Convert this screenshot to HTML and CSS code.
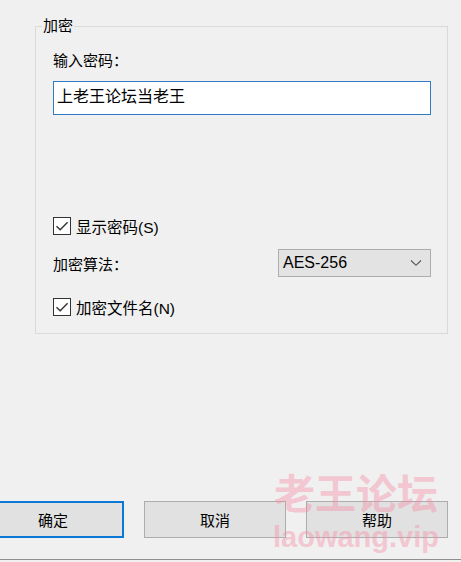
FILE: index.html
```html
<!DOCTYPE html>
<html lang="zh-CN">
<head>
    <meta charset="UTF-8">
    <title>加密</title>
<link rel="stylesheet" href="styles.css">
</head>
<body>

<div class="dialog">
    <fieldset class="group">
        <legend>加密</legend>

        <div class="field-label">输入密码：</div>
        <div class="password-box">上老王论坛当老王</div>

        <div class="check-row first">
            <span class="checkbox">
                <svg width="18" height="18" viewBox="0 0 18 18"><path d="M3.5 9.2 L7.2 12.8 L14.6 5.2" fill="none" stroke="#333" stroke-width="1.4"/></svg>
            </span>
            <span class="check-text">显示密码(S)</span>
        </div>

        <div class="algo-row">
            <span>加密算法：</span>
            <div class="select">
                <span>AES-256</span>
                <svg width="12" height="8" viewBox="0 0 12 8"><path d="M1 1.5 L6 6.3 L11 1.5" fill="none" stroke="#555" stroke-width="1.1"/></svg>
            </div>
        </div>

        <div class="check-row">
            <span class="checkbox">
                <svg width="18" height="18" viewBox="0 0 18 18"><path d="M3.5 9.2 L7.2 12.8 L14.6 5.2" fill="none" stroke="#333" stroke-width="1.4"/></svg>
            </span>
            <span class="check-text">加密文件名(N)</span>
        </div>
    </fieldset>

    <div class="buttons">
        <button class="btn default">确定</button>
        <button class="btn">取消</button>
        <button class="btn">帮助</button>
    </div>

    <div class="edge"></div>

    <div class="watermark">
        <div class="wm-cn">老王论坛</div>
        <div class="wm-en">laowang.vip</div>
    </div>
</div>

</body>
</html>
```

FILE: styles.css
```css
body {
  margin: 0;
  background-color: #f0f0f0;
  font-family: "Liberation Sans", "Noto Sans CJK SC", sans-serif;
  font-size: 15px;
  color: #000;
  overflow: hidden;
}

.dialog {
  position: relative;
  width: 461px;
  height: 562px;
  padding-top: 16px;
  box-sizing: border-box;
}

.group {
  margin: 0 0 0 35px;
  width: 413px;
  box-sizing: border-box;
  border: 1px solid #dadada;
  padding: 0 16px 16px 17px;
}

.group legend {
  margin-left: -11px;
  padding: 0 1px;
  line-height: 20px;
  height: 20px;
}

.field-label {
  margin-top: 15px;
  line-height: 20px;
}

.password-box {
  margin-top: 10px;
  height: 34px;
  box-sizing: border-box;
  border: 1px solid #2f7cc4;
  background-color: #fff;
  padding: 3px 3px;
  font-size: 16px;
  line-height: 24px;
}

.check-row {
  display: flex;
  align-items: center;
  gap: 5px;
  height: 20px;
  margin-top: 20px;
}

.check-row.first {
  margin-top: 101px;
}

.check-text {
  font-size: 15.5px;
}

.checkbox {
  width: 18px;
  height: 18px;
  box-sizing: border-box;
  border: 1px solid #333;
  background-color: #fff;
  display: flex;
  align-items: center;
  justify-content: center;
}

.checkbox svg {
  display: block;
  flex-shrink: 0;
}

.algo-row {
  display: flex;
  align-items: center;
  justify-content: space-between;
  margin-top: 13px;
  height: 28px;
}

.select {
  width: 153px;
  height: 28px;
  box-sizing: border-box;
  border: 1px solid #adadad;
  background-color: #e3e3e3;
  display: flex;
  align-items: center;
  justify-content: space-between;
  padding: 0 8px 0 4px;
  font-size: 16px;
}

.select svg {
  display: block;
}

.buttons {
  display: flex;
  justify-content: flex-end;
  gap: 20px;
  padding-right: 13px;
  margin-top: 167px;
}

.btn {
  flex-shrink: 0;
  width: 142px;
  height: 37px;
  box-sizing: border-box;
  border: 1px solid #adadad;
  background-color: #e1e1e1;
  font-family: inherit;
  font-size: 15px;
  color: #000;
  padding: 0;
}

.btn.default {
  border: 2px solid #0a78d4;
}

.edge {
  margin-top: 21px;
  height: 1px;
  background-color: #8f8f8f;
}

.watermark {
  position: absolute;
  left: 273px;
  top: 470px;
  color: #f590a8;
  opacity: 0.42;
  font-weight: bold;
  text-align: center;
  pointer-events: none;
}

.wm-cn {
  font-size: 41px;
  line-height: 50px;
}

.wm-en {
  font-size: 29px;
  line-height: 30px;
  margin-top: 2px;
}
```
